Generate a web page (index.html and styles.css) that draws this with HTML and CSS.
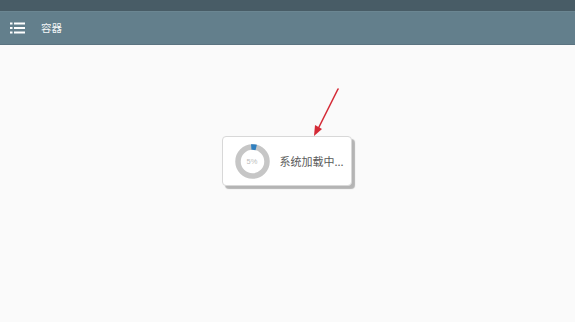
FILE: index.html
```html
<!DOCTYPE html>
<html lang="zh">
<head>
<meta charset="utf-8">
<link rel="stylesheet" href="styles.css">
</head>
<body>
<div class="status"></div>
<header class="appbar">
  <svg class="menu" width="15" height="12" viewBox="0 0 15 12">
    <rect x="0" y="0.5" width="2.5" height="2" fill="#fff"/>
    <rect x="4" y="0.5" width="11" height="2" fill="#fff"/>
    <rect x="0" y="5" width="2.5" height="2" fill="#fff"/>
    <rect x="4" y="5" width="11" height="2" fill="#fff"/>
    <rect x="0" y="9.5" width="2.5" height="2" fill="#fff"/>
    <rect x="4" y="9.5" width="11" height="2" fill="#fff"/>
  </svg>
  <span class="title">容器</span>
</header>
<div class="overlay">
  <div class="loader">
    <div class="ring">
      <svg width="35" height="35" viewBox="0 0 35 35">
        <circle cx="17.5" cy="17.5" r="14.5" fill="none" stroke="#c6c6c6" stroke-width="5.5"/>
        <circle cx="17.5" cy="17.5" r="14.5" fill="none" stroke="#2f7fbf" stroke-width="5.5" stroke-dasharray="5 200" transform="rotate(-95 17.5 17.5)"/>
      </svg>
      <span class="pct">5%</span>
    </div>
    <span class="msg">系统加载中...</span>
  </div>
</div>
<svg class="arrow" width="40" height="56" viewBox="0 0 40 56">
  <line x1="36" y1="4" x2="15.5" y2="45" stroke="#d42a36" stroke-width="1.6" stroke-linecap="round"/>
  <polygon points="12,51 13,40 20,44" fill="#d42a36"/>
</svg>
</body>
</html>
```
FILE: styles.css
```css
html, body {
  margin: 0;
  padding: 0;
}
body {
  width: 575px;
  height: 322px;
  background: #fafafa;
  font-family: "Noto Sans CJK SC", "Liberation Sans", sans-serif;
  overflow: hidden;
  position: relative;
}
.status {
  height: 11px;
  background: #485c66;
}
.appbar {
  height: 34px;
  background: #637f8c;
  display: flex;
  align-items: center;
  padding-left: 10px;
  box-sizing: border-box;
  border-bottom: 1px solid #5a7380;
  border-top: 1px solid #6b8692;
}
.menu {
  display: block;
}
.title {
  color: #f4f6f7;
  font-size: 10.5px;
  margin-left: 16px;
  line-height: 1;
}
.overlay {
  position: absolute;
  inset: 0;
  display: flex;
  align-items: center;
  justify-content: center;
  padding-top: 0px;
}
.loader {
  width: 130px;
  height: 50px;
  box-sizing: border-box;
  background: #fff;
  border: 1px solid #d8d8d8;
  border-radius: 4px;
  box-shadow: 3px 3px 1px rgba(0,0,0,0.28);
  display: flex;
  align-items: center;
  padding-left: 12px;
  margin-left: -2px;
}
.ring {
  position: relative;
  width: 35px;
  height: 35px;
}
.ring svg {
  display: block;
}
.pct {
  position: absolute;
  inset: 0;
  display: flex;
  align-items: center;
  justify-content: center;
  font-family: "Liberation Sans", sans-serif;
  font-size: 7.5px;
  color: #bdbdbd;
}
.msg {
  margin-left: 10px;
  font-size: 11px;
  color: #5a5a5a;
  white-space: nowrap;
}
.arrow {
  position: absolute;
  left: 302px;
  top: 85px;
}
```
